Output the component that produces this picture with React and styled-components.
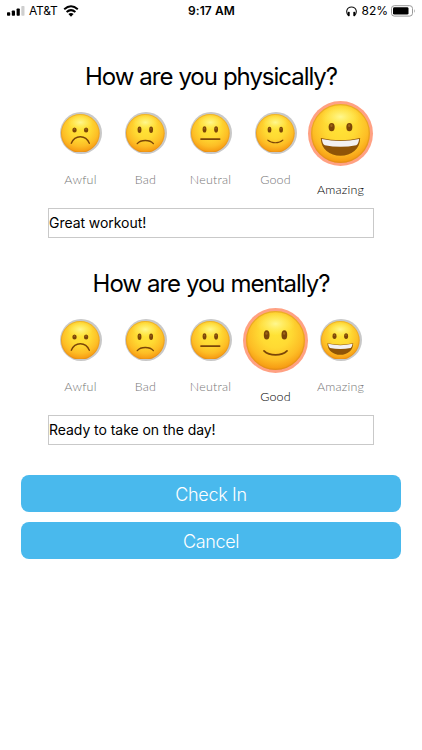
import { useState } from "react";
import styled, { createGlobalStyle } from "styled-components";

const MOODS = ["Awful", "Bad", "Neutral", "Good", "Amazing"];

const Eyes = ({ y = -6, rx = 2.9, ry = 4.6 }) => (
  <g fill="#7b4608">
    <ellipse cx="-9" cy={y} rx={rx} ry={ry} />
    <ellipse cx="9" cy={y} rx={rx} ry={ry} />
    <ellipse cx="-9.2" cy={y - 1.5} rx="1.2" ry="1.4" fill="#9d6517" />
    <ellipse cx="8.8" cy={y - 1.5} rx="1.2" ry="1.4" fill="#9d6517" />
  </g>
);

const Mouth = ({ d, width = 2.2 }) => (
  <path d={d} fill="none" stroke="#7b4608" strokeWidth={width} strokeLinecap="round" />
);

const features = {
  Awful: (
    <>
      <Eyes y={-5} rx={3.4} ry={3.9} />
      <Mouth d="M-14 15.5 C-8.5 2 8.5 2 14 15.5" />
    </>
  ),
  Bad: (
    <>
      <Eyes y={-5.5} rx={3} ry={5} />
      <Mouth d="M-12.5 16 C-7 9.5 7 9.5 12.5 16" />
    </>
  ),
  Neutral: (
    <>
      <Eyes y={-6} rx={3} ry={4.8} />
      <Mouth d="M-14.5 9 H14.5" width={2.6} />
    </>
  ),
  Good: (
    <>
      <Eyes y={-5.7} />
      <Mouth d="M-11.7 10.5 C-6 16 6 16 11.7 10.5" width={1.8} />
    </>
  ),
  Amazing: (
    <>
      <Eyes y={-6.5} rx={3.1} ry={4.3} />
      <path d="M-20 4.5 Q0 9 20 4.5 C20 16 11 22.5 0 22.5 C-11 22.5 -20 16 -20 4.5Z" fill="#8f5407" />
      <path d="M-19 5.5 Q0 9.8 19 5.5 C18.5 9 17.5 11.2 16 11.9 Q0 15 -16 11.9 C-17.5 11.2 -18.5 9 -19 5.5Z" fill="#f3f1f2" />
    </>
  ),
};

const Face = ({ mood, id }) => (
  <svg viewBox="-30 -30 60 60" width="100%" height="100%">
    <defs>
      <radialGradient id={id} cx="0.5" cy="0.36" r="0.66">
        <stop offset="0" stopColor="#ffe436" />
        <stop offset="0.4" stopColor="#ffda33" />
        <stop offset="0.72" stopColor="#fdbd25" />
        <stop offset="0.92" stopColor="#f79d14" />
        <stop offset="1" stopColor="#ea850b" />
      </radialGradient>
      <radialGradient id={`${id}-shine`} cx="0.5" cy="0.5" r="0.5">
        <stop offset="0" stopColor="#fffa9a" stopOpacity="0.9" />
        <stop offset="1" stopColor="#fff36a" stopOpacity="0" />
      </radialGradient>
    </defs>
    <circle r="30" fill={`url(#${id})`} />
    <ellipse cy="-17" rx="20" ry="12" fill={`url(#${id}-shine)`} />
    <circle r="29.3" fill="none" stroke="#d98b1d" strokeWidth="1.2" opacity="0.5" />
    {features[mood]}
  </svg>
);

const Question = ({ name, title, initialMood, initialNote }) => {
  const [mood, setMood] = useState(initialMood);
  const [note, setNote] = useState(initialNote);

  return (
    <Section>
      <Title>{title}</Title>
      <MoodRow>
        {MOODS.map((item) => (
          <Mood key={item} onClick={() => setMood(item)}>
            <Ring $active={item === mood}>
              <Face mood={item} id={`${name}-${item}`} />
            </Ring>
            <Label $active={item === mood}>{item}</Label>
          </Mood>
        ))}
      </MoodRow>
      <Note value={note} onChange={(e) => setNote(e.target.value)} />
    </Section>
  );
};

const App = () => (
  <Screen>
    <GlobalStyle />
    <StatusBar>
      <StatusGroup>
        <svg width="18" height="10" viewBox="0 0 18 10">
          <rect x="0" y="6.2" width="3.2" height="3.6" rx="0.8" />
          <rect x="4.8" y="4.5" width="3.2" height="5.3" rx="0.8" />
          <rect x="9.6" y="2.5" width="3.2" height="7.3" rx="0.8" />
          <rect x="14.3" y="0" width="3.2" height="9.8" rx="0.8" fill="#cfcfcf" />
        </svg>
        <Carrier>AT&amp;T</Carrier>
        <svg width="16" height="12" viewBox="0 0 16 12">
          <path d="M1.2 4.2 Q8 -1.6 14.8 4.2" fill="none" stroke="#000" strokeWidth="2" />
          <path d="M3.6 7 Q8 3.2 12.4 7" fill="none" stroke="#000" strokeWidth="2" />
          <path d="M5.4 9 Q8 6.8 10.6 9 L8 11.7Z" />
        </svg>
      </StatusGroup>
      <Clock>9:17 AM</Clock>
      <StatusGroup $end>
        <svg width="11" height="11" viewBox="0 0 11 11">
          <path d="M2.6 9.5 C-0.8 6.5 0.6 1 5.5 1 C10.4 1 11.8 6.5 8.4 9.5" fill="none" stroke="#111" strokeWidth="1.1" />
          <rect x="1.8" y="5.8" width="1.9" height="4.5" rx="0.7" />
          <rect x="7.3" y="5.8" width="1.9" height="4.5" rx="0.7" />
        </svg>
        <Percent>82%</Percent>
        <svg width="25" height="12" viewBox="0 0 25 12">
          <rect x="0.5" y="0.7" width="21" height="10.4" rx="2.8" fill="#fff" stroke="#999" />
          <rect x="2" y="2.2" width="15.5" height="7.4" rx="1.4" />
          <path d="M23 4 Q24.6 6 23 8Z" fill="#999" />
        </svg>
      </StatusGroup>
    </StatusBar>
    <Question
      name="physical"
      title="How are you physically?"
      initialMood="Amazing"
      initialNote="Great workout!"
    />
    <Question
      name="mental"
      title="How are you mentally?"
      initialMood="Good"
      initialNote="Ready to take on the day!"
    />
    <Actions>
      <Button>Check In</Button>
      <Button>Cancel</Button>
    </Actions>
  </Screen>
);

const GlobalStyle = createGlobalStyle`
  * {
    box-sizing: border-box;
  }

  body {
    margin: 0;
    background: #fff;
  }
`;

const Screen = styled.div`
  width: 422px;
  height: 750px;
  overflow: hidden;
  background: #fff;
  color: #000;
  font-family: Inter, sans-serif;
`;

const StatusBar = styled.header`
  display: grid;
  grid-template-columns: 1fr auto 1fr;
  align-items: center;
  height: 22px;
  padding: 0 6px 0 7px;
`;

const StatusGroup = styled.div`
  display: flex;
  align-items: center;
  justify-content: ${({ $end }) => ($end ? "flex-end" : "flex-start")};
  font-size: 12px;
  line-height: 20px;
  gap: ${({ $end }) => ($end ? "4px" : "5px")};
`;

const Carrier = styled.span`
  margin-left: -1px;
  letter-spacing: -0.2px;
`;

const Percent = styled.span`
  margin-right: -1px;
`;

const Clock = styled.span`
  font-size: 12px;
  line-height: 20px;
  font-weight: 600;
  letter-spacing: 0.1px;
`;

const Section = styled.section`
  height: 207px;
  padding: 40px 48px 0;
`;

const Title = styled.h1`
  margin: 0 -20px;
  height: 30px;
  line-height: 30px;
  font-size: 24px;
  font-weight: 400;
  letter-spacing: -1.03px;
  word-spacing: 0.3px;
  text-align: center;
`;

const MoodRow = styled.div`
  display: flex;
  align-items: center;
  height: 116px;
`;

const Mood = styled.div`
  display: flex;
  flex-direction: column;
  align-items: center;
  flex: 0 0 65px;
  cursor: pointer;
`;

const Ring = styled.div`
  width: ${({ $active }) => ($active ? "65px" : "42px")};
  height: ${({ $active }) => ($active ? "65px" : "42px")};
  padding: ${({ $active }) => ($active ? "3px" : "1.7px")};
  border-radius: 50%;
  background: ${({ $active }) => ($active ? "#ffa183" : "#c8c8c8")};

  svg {
    display: block;
  }
`;

const Label = styled.span`
  margin-top: ${({ $active }) => ($active ? "16px" : "18px")};
  margin-bottom: ${({ $active }) => ($active ? "2px" : "0")};
  line-height: 16px;
  font-family: Lato, sans-serif;
  font-size: 12.5px;
  font-weight: 300;
  letter-spacing: 0.2px;
  color: ${({ $active }) => ($active ? "#000" : "#777")};
`;

const Note = styled.input`
  display: block;
  width: 326px;
  height: 30px;
  padding: 0 0 1px;
  border: 1px solid #c9c9c9;
  border-radius: 0;
  outline: none;
  font-family: Inter, sans-serif;
  font-size: 14px;
  letter-spacing: -0.05px;
  color: #000;
`;

const Actions = styled.div`
  display: flex;
  flex-direction: column;
  gap: 10px;
  padding: 39px 21px 0;
`;

const Button = styled.button`
  height: 37px;
  padding: 1px 0 0;
  border: none;
  border-radius: 8px;
  background: #49b9ed;
  color: #fff;
  font-family: Inter, sans-serif;
  font-size: 18px;
  font-weight: 300;
  letter-spacing: -0.35px;
`;

export default App;
